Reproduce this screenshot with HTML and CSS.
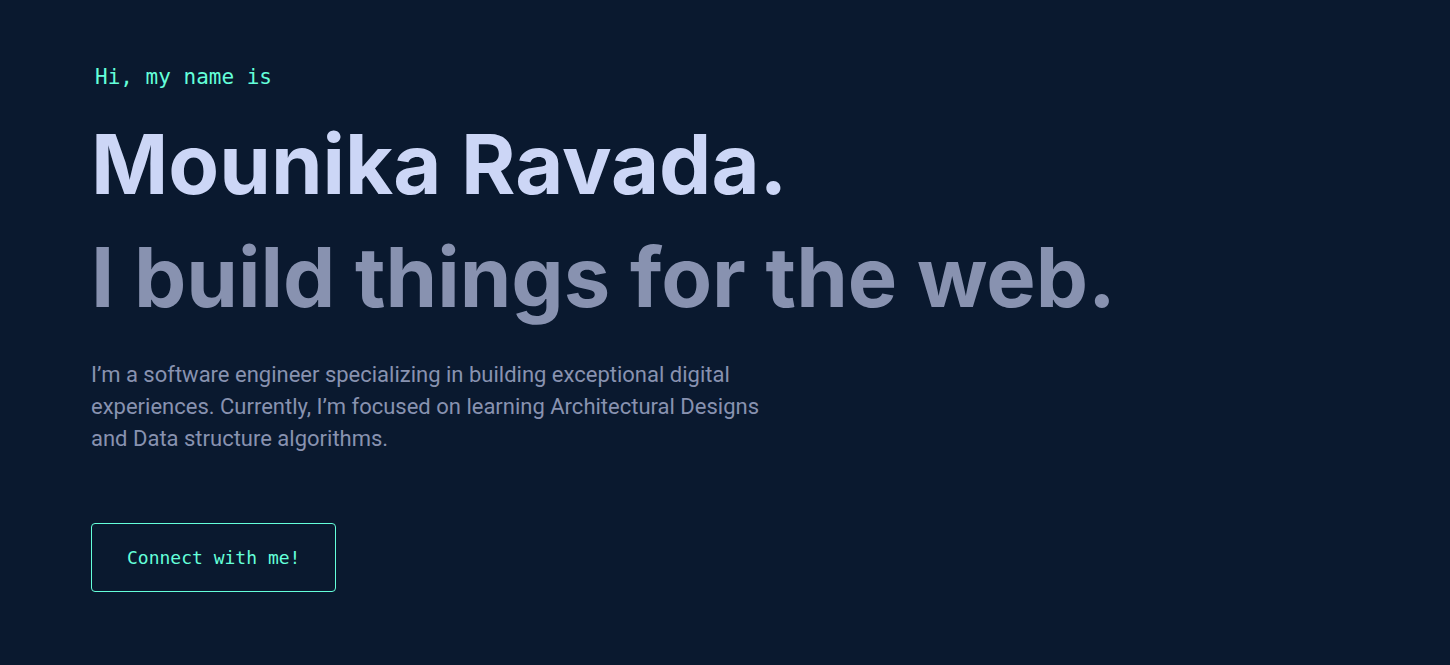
FILE: index.html
```
<!DOCTYPE html>
<html lang="en">
<head>
<meta charset="utf-8">
<meta name="viewport" content="width=device-width, initial-scale=1">
<title>Mounika Ravada</title>
<link rel="stylesheet" href="styles.css">
</head>
<body>
<main class="hero">
  <p class="greeting">Hi, my name is</p>
  <h1 class="name">Mounika Ravada.</h1>
  <h2 class="tagline">I build things for the web.</h2>
  <p class="intro">I’m a software engineer specializing in building exceptional digital experiences. Currently, I’m focused on learning Architectural Designs and Data structure algorithms.</p>
  <a class="contact" href="#contact">Connect with me!</a>
</main>
</body>
</html>
```
FILE: styles.css
```
* { box-sizing: border-box; }
body {
  margin: 0;
  background: #0a192f;
  color: #8892b0;
  font-family: Inter, "Liberation Sans", sans-serif;
}
.hero {
  display: flex;
  flex-direction: column;
  align-items: flex-start;
  padding: 64px 91px;
}
.greeting {
  margin: 0 0 28px 4px;
  color: #64ffda;
  font: 21px/26px "DejaVu Sans Mono", monospace;
}
.name, .tagline {
  margin: 0;
  font-size: 83px;
  line-height: 92px;
  font-weight: 700;
}
.name { color: #ccd6f6; margin-bottom: 21px; }
.tagline { margin-bottom: 36px; }
.intro {
  max-width: 680px;
  margin: 0 0 68px;
  font-family: Roboto, "Liberation Sans", sans-serif;
  font-size: 22px;
  line-height: 32px;
}
.contact {
  padding: 20px 35px;
  border: 1px solid #64ffda;
  border-radius: 4px;
  color: #64ffda;
  font: 18px/27px "DejaVu Sans Mono", monospace;
  text-decoration: none;
}
```
